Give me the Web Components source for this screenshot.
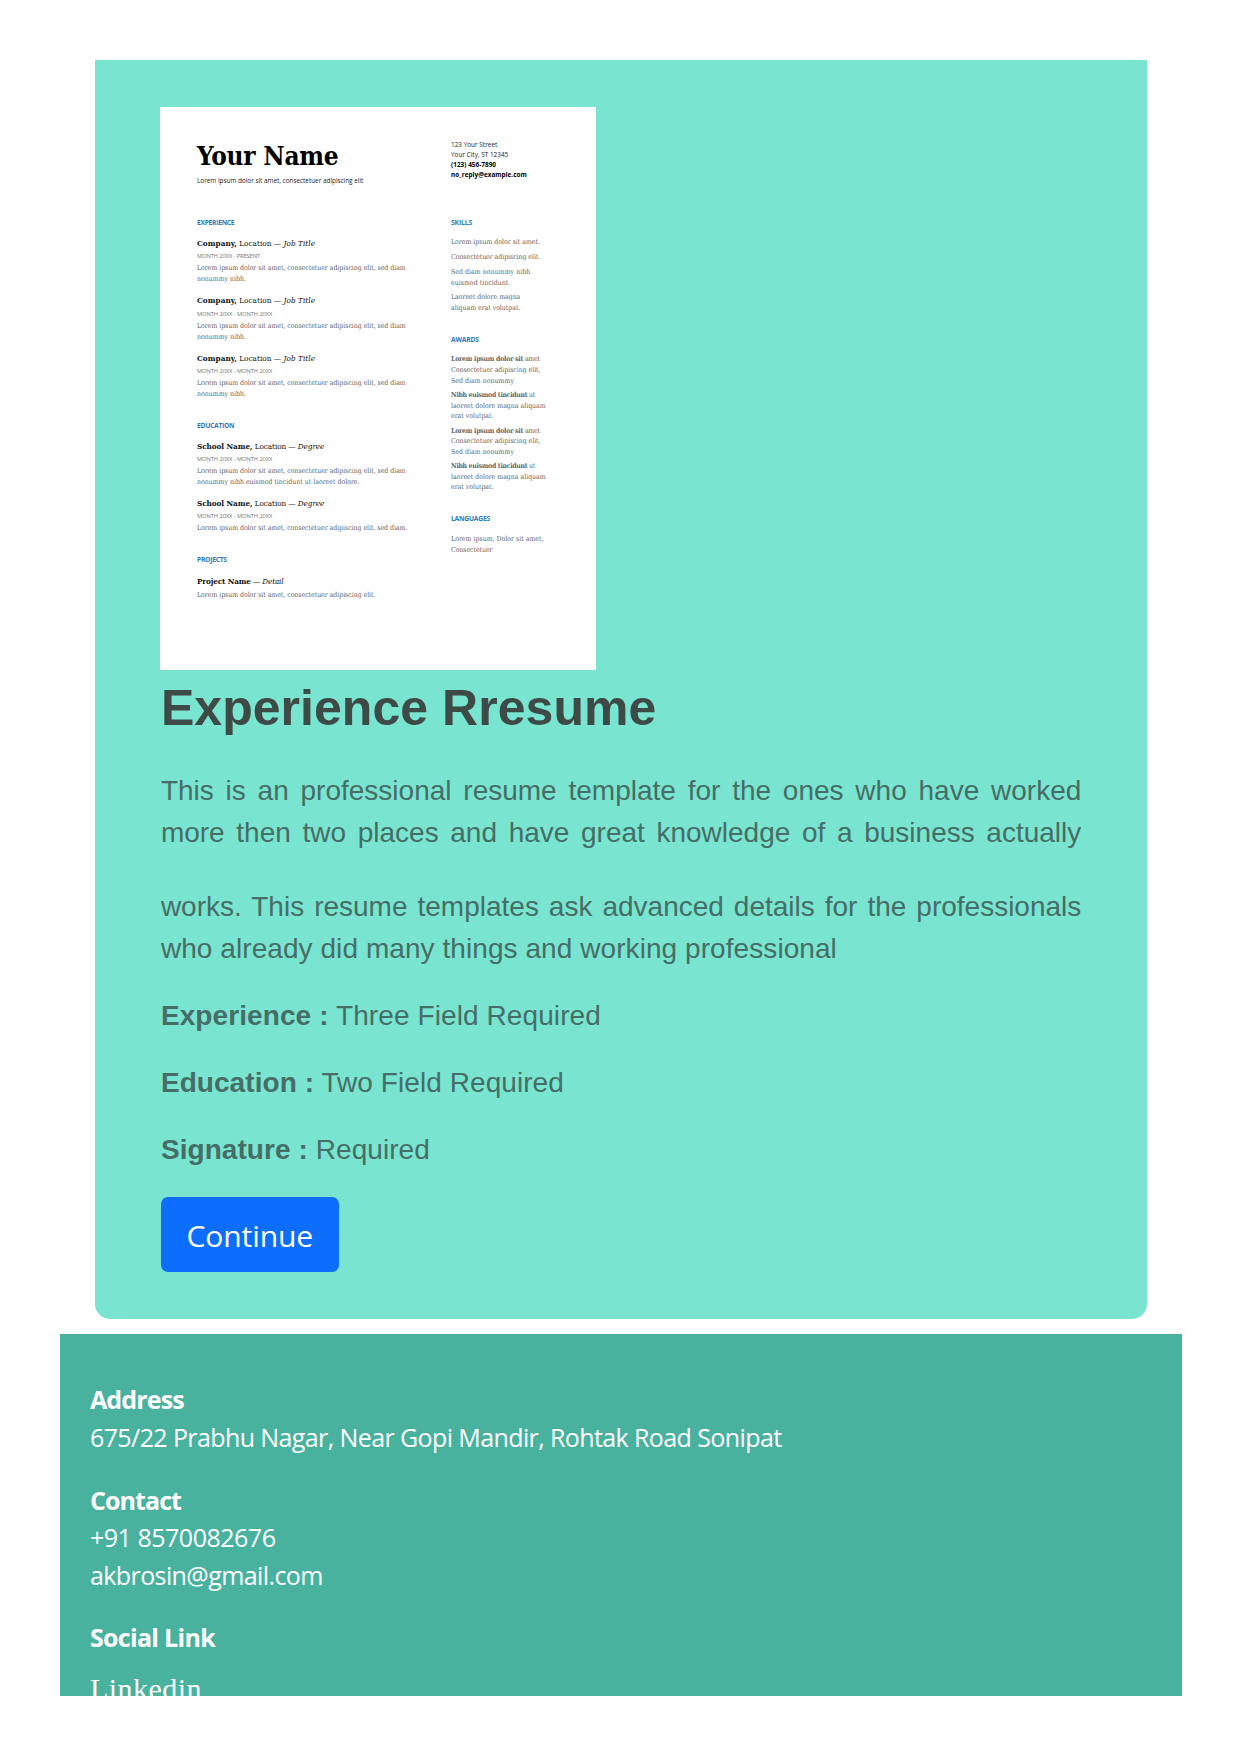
<!DOCTYPE html>
<html lang="en">
<head>
<meta charset="utf-8">
<title>Experience Resume</title>
<style>
html,body{margin:0;background:#fff}
body{width:1240px;height:1754px;overflow:hidden}
</style>
</head>
<body>
<template-page></template-page>
<script>
// One line of text; h = distance from the previous baseline, w = advance width.
class TextLine extends HTMLElement{
  connectedCallback(){
    const h=this.getAttribute('h'), w=this.getAttribute('w');
    const root=this.attachShadow({mode:'open'});
    root.innerHTML=`<style>
      :host{display:block;line-height:0;white-space:nowrap;height:${h}px}
      :host::before{content:'';display:inline-block;height:${h}px}
      :host([justify]){text-align:justify;text-align-last:justify}
      ::slotted(*){line-height:0}
    </style><span><slot></slot></span>`;
    if(w){
      const s=root.querySelector('span');
      s.style.letterSpacing='0px';
      const n=this.textContent.length;
      s.style.letterSpacing=((+w-s.getBoundingClientRect().width)/n)+'px';
    }
  }
}
class ResumePreview extends HTMLElement{
  connectedCallback(){
    const job=(h,a,b,w,when,ww)=>`<text-line class="t" h="${h}" w="${w}"><b>${a}</b> ${b}</text-line><text-line class="m" h="12" w="${ww}">${when}</text-line>`;
    const mm='MONTH 20XX - MONTH 20XX', lorem='Lorem ipsum dolor sit amet, consectetuer adipiscing elit, sed diam';
    const award=(h)=>`<text-line h="${h}" w="88.7"><b>Lorem ipsum dolor sit</b> amet</text-line><text-line h="10.5" w="89.5">Consectetuer adipiscing elit,</text-line><text-line h="10.5" w="63">Sed diam nonummy</text-line>
      <text-line h="14.6" w="84"><b>Nibh euismod tincidunt</b> ut</text-line><text-line h="10.5" w="94.7">laoreet dolore magna aliquam</text-line><text-line h="10.5" w="42.5">erat volutpat.</text-line>`;
    this.attachShadow({mode:'open'}).innerHTML=`<style>
      :host{display:flex;box-sizing:border-box;width:436px;height:563px;background:#fff;padding-left:37px;margin-left:-.5px;
        font:6.9px "DejaVu Serif Condensed","DejaVu Serif",serif;font-stretch:condensed;color:#626262}
      .l{width:254px}
      .name{font-size:26px;font-weight:bold;color:#000}
      .s,.a{font:6.4px "Open Sans",sans-serif;color:#222}
      .k{font-weight:bold;color:#000}
      .h{font:bold 6.7px "Open Sans",sans-serif;color:#2e78bb}
      .t{font-size:8.1px;color:#111}
      .m{font:5.8px "Open Sans",sans-serif;color:#777}
      .r b{color:#666}
    </style>
    <div class="l">
      <text-line class="name" h="58.1" w="141.5">Your Name</text-line>
      <text-line class="s" h="18.2" w="166.3">Lorem ipsum dolor sit amet, consectetuer adipiscing elit</text-line>
      <text-line class="h" h="42" w="37.3">EXPERIENCE</text-line>
      ${job(21,'Company,','Location — <i>Job Title</i>',118,'MONTH 20XX - PRESENT',63)}
      <text-line h="12" w="208.7">${lorem}</text-line><text-line h="10.5" w="49">nonummy nibh.</text-line>
      ${job(23.2,'Company,','Location — <i>Job Title</i>',118,mm,75.3)}
      <text-line h="12" w="208.7">${lorem}</text-line><text-line h="10.5" w="49">nonummy nibh.</text-line>
      ${job(23.2,'Company,','Location — <i>Job Title</i>',118,mm,75.3)}
      <text-line h="12" w="208.7">${lorem}</text-line><text-line h="10.5" w="49">nonummy nibh.</text-line>
      <text-line class="h" h="32" w="37.3">EDUCATION</text-line>
      ${job(20.8,'School Name,','Location — <i>Degree</i>',127.3,mm,75.3)}
      <text-line h="12.1" w="208.7">${lorem}</text-line><text-line h="10.5" w="162.5">nonummy nibh euismod tincidunt ut laoreet dolore.</text-line>
      ${job(23.1,'School Name,','Location — <i>Degree</i>',127.3,mm,75.3)}
      <text-line h="12.1" w="210.3">${lorem}.</text-line>
      <text-line class="h" h="32.2" w="29.7">PROJECTS</text-line>
      <text-line class="t" h="21" w="86.5"><b>Project Name</b> — <i>Detail</i></text-line>
      <text-line h="12.9" w="178.5">Lorem ipsum dolor sit amet, consectetuer adipiscing elit.</text-line>
    </div>
    <div class="r">
      <text-line class="a" h="40" w="46.3">123 Your Street</text-line>
      <text-line class="a" h="10.2" w="57.3">Your City, ST 12345</text-line>
      <text-line class="a k" h="10.1" w="45">(123) 456-7890</text-line>
      <text-line class="a k" h="10.1" w="75.7">no_reply@example.com</text-line>
      <text-line class="h" h="47.9" w="21">SKILLS</text-line>
      <text-line h="19.4" w="89">Lorem ipsum dolor sit amet.</text-line>
      <text-line h="14.6" w="89.3">Consectetuer adipiscing elit.</text-line>
      <text-line h="14.6" w="79.3">Sed diam nonummy nibh</text-line>
      <text-line h="10.6" w="59.3">euismod tincidunt.</text-line>
      <text-line h="14.6" w="69.3">Laoreet dolore magna</text-line>
      <text-line h="10.5" w="69.3">aliquam erat volutpat.</text-line>
      <text-line class="h" h="32.6" w="27.7">AWARDS</text-line>
      ${award(19.2)}${award(14.8)}
      <text-line class="h" h="32.4" w="39">LANGUAGES</text-line>
      <text-line h="19.6" w="92.5">Lorem ipsum, Dolor sit amet,</text-line>
      <text-line h="10.5" w="41.5">Consectetuer</text-line>
    </div>`;
  }
}
class ContinueButton extends HTMLElement{
  connectedCallback(){
    this.attachShadow({mode:'open'}).innerHTML=`<style>
      :host{display:block;margin-top:38px}
      .btn{box-sizing:border-box;width:178.5px;height:75px;border-radius:7px;background:#0d6efd;
        padding-left:26px;color:#fff;font:30px "Open Sans","Noto Sans",sans-serif}
    </style><div class="btn" role="button" tabindex="0"><text-line h="50" w="126.5">Continue</text-line></div>`;
  }
}
class ResumeCard extends HTMLElement{
  connectedCallback(){
    this.attachShadow({mode:'open'}).innerHTML=`<style>
      :host{display:block;box-sizing:border-box;width:1052.3px;height:1258.5px;margin-left:95px;padding:46.5px 66.5px 0 65.5px;
        background:#79e5d0;border-radius:0 0 15px 15px;font:28px "Liberation Sans",Arial,sans-serif;color:#466e66}
      .title{font-size:50px;font-weight:bold;color:#3d4a46}
      .copy{margin:0 -.5px 0 .4px}
    </style>
    <resume-preview></resume-preview>
    <div class="copy">
    <text-line class="title" h="54.7" w="495.5">Experience Rresume</text-line>
    <text-line justify h="75.8">This is an professional resume template for the ones who have worked</text-line>
    <text-line justify h="42">more then two places and have great knowledge of a business actually</text-line>
    <text-line justify h="74">works. This resume templates ask advanced details for the professionals</text-line>
    <text-line h="42" w="676">who already did many things and working professional</text-line>
    <text-line h="67" w="440"><b>Experience :</b> Three Field Required</text-line>
    <text-line h="67" w="403"><b>Education :</b> Two Field Required</text-line>
    <text-line h="67" w="269"><b>Signature :</b> Required</text-line>
    </div>
    <continue-button></continue-button>`;
  }
}
class SiteFooter extends HTMLElement{
  connectedCallback(){
    this.attachShadow({mode:'open'}).innerHTML=`<style>
      :host{display:block;box-sizing:border-box;width:1121.6px;height:361.5px;margin:15.5px 0 0 60.4px;padding-left:29.6px;overflow:hidden;
        background:#48b29e;color:#fff;font:25px "Open Sans","Noto Sans",sans-serif}
      .b{font-weight:bold}
      .link{font:30px "Liberation Serif",serif}
    </style>
    <text-line class="b" h="74.6" w="93.8">Address</text-line>
    <text-line h="38.1" w="691.5">675/22 Prabhu Nagar, Near Gopi Mandir, Rohtak Road Sonipat</text-line>
    <text-line class="b" h="62.9" w="91">Contact</text-line>
    <text-line h="37.4" w="185.5">+91 8570082676</text-line>
    <text-line h="37.8" w="232.8">akbrosin@gmail.com</text-line>
    <text-line class="b" h="61.8" w="125">Social Link</text-line>
    <text-line class="link" h="51.8" w="112">Linkedin</text-line>`;
  }
}
class TemplatePage extends HTMLElement{
  connectedCallback(){
    this.attachShadow({mode:'open'}).innerHTML=`<style>:host{display:block;padding-top:60.2px}</style><resume-card></resume-card><site-footer></site-footer>`;
  }
}
customElements.define('text-line',TextLine);
customElements.define('resume-preview',ResumePreview);
customElements.define('continue-button',ContinueButton);
customElements.define('resume-card',ResumeCard);
customElements.define('site-footer',SiteFooter);
customElements.define('template-page',TemplatePage);
</script>
</body>
</html>
